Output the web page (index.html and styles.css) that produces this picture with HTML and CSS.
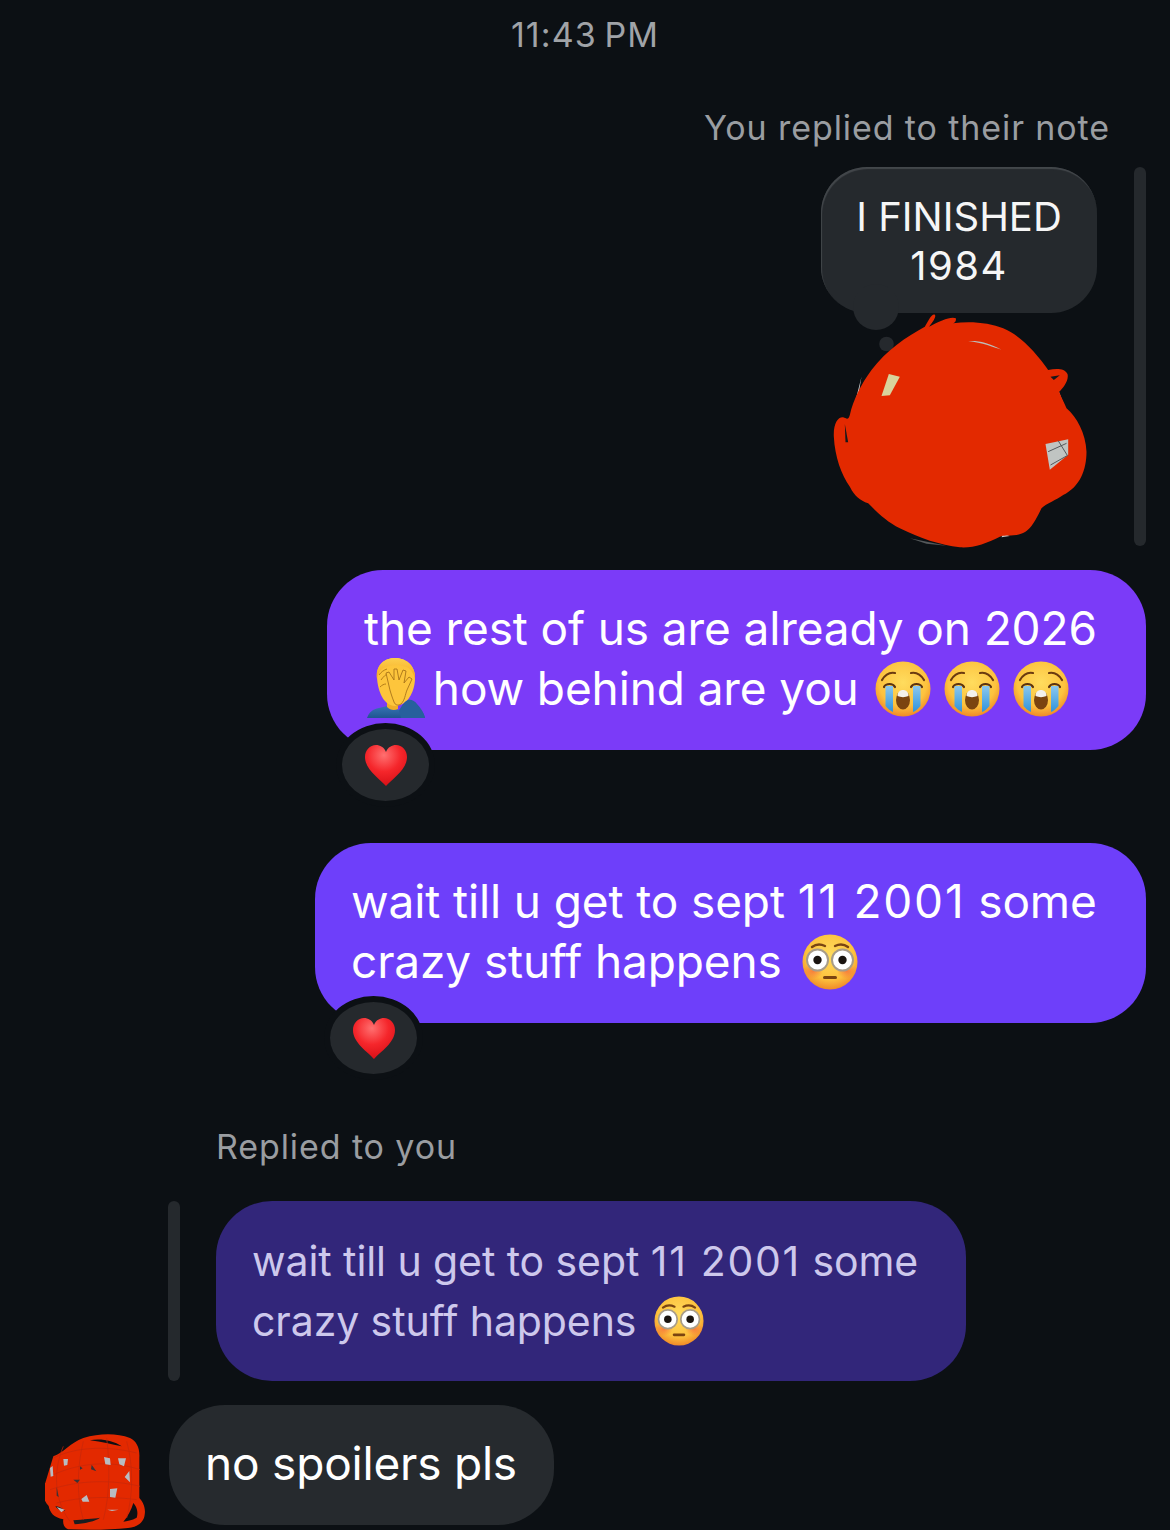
FILE: index.html
```html
<!DOCTYPE html>
<html lang="en">
<head>
    <meta charset="UTF-8">
    <meta name="viewport" content="width=device-width, initial-scale=1.0">
    <title>Chat</title>
    <link rel="stylesheet" href="styles.css">
</head>
<body>
    <svg class="defs" width="0" height="0" aria-hidden="true">
        <defs>
            <radialGradient id="skin" cx="50%" cy="38%" r="62%">
                <stop offset="0" stop-color="#ffdc5e"/>
                <stop offset="0.7" stop-color="#fdc23e"/>
                <stop offset="1" stop-color="#f08a28"/>
            </radialGradient>
            <linearGradient id="tear" x1="0" y1="0" x2="0" y2="1">
                <stop offset="0" stop-color="#8cc8ee"/>
                <stop offset="1" stop-color="#2f93dc"/>
            </linearGradient>
            <radialGradient id="heartfill" cx="45%" cy="25%" r="80%">
                <stop offset="0" stop-color="#ff7070"/>
                <stop offset="0.5" stop-color="#f5262b"/>
                <stop offset="1" stop-color="#d40d14"/>
            </radialGradient>
            <radialGradient id="cheek" cx="50%" cy="50%" r="50%">
                <stop offset="0" stop-color="#f4603c" stop-opacity="0.7"/>
                <stop offset="1" stop-color="#f4603c" stop-opacity="0"/>
            </radialGradient>
            <linearGradient id="shirt" x1="0" y1="0" x2="0" y2="1">
                <stop offset="0" stop-color="#3f7fc0"/>
                <stop offset="1" stop-color="#1f5590"/>
            </linearGradient>
            <linearGradient id="hair" x1="0" y1="0" x2="0" y2="1">
                <stop offset="0" stop-color="#fdcf4e"/>
                <stop offset="1" stop-color="#f4a71e"/>
            </linearGradient>

            <symbol id="cry" viewBox="0 0 56 56">
                <circle cx="28" cy="28" r="27.500" fill="url(#skin)"/>
                <path d="M7 19c3-5 8-8 13-7M49 19c-3-5-8-8-13-7" fill="none" stroke="#6b3a10" stroke-width="2.200" stroke-linecap="round"/>
                <path d="M9 26c2-4 9-4 11 0M36 26c2-4 9-4 11 0" fill="none" stroke="#5c3310" stroke-width="2.200" stroke-linecap="round"/>
                <path d="M10.500 25h7.500v26c-3-1.500-5.500-3.500-7.500-6zM38 25h7.500v20c-2 2.500-4.500 5-7.500 6z" fill="url(#tear)"/>
                <ellipse cx="28" cy="39" rx="7" ry="9.500" fill="#7b4410"/>
                <path d="M22.500 35c0-4 2.500-6 5.500-6s5.500 2 5.500 6c-3.500 1.500-7.500 1.500-11 0z" fill="#f4f1ec"/>
            </symbol>

            <symbol id="flushed" viewBox="0 0 56 56">
                <circle cx="28" cy="28" r="27.500" fill="url(#skin)"/>
                <ellipse cx="11" cy="37" rx="10" ry="8" fill="url(#cheek)"/>
                <ellipse cx="45" cy="37" rx="10" ry="8" fill="url(#cheek)"/>
                <path d="M10 13c4-3 9-3 13-1M33 12c4-2 9-2 13 1" fill="none" stroke="#7a4512" stroke-width="2.400" stroke-linecap="round"/>
                <circle cx="15.500" cy="26" r="10.500" fill="#fff" stroke="#a89c88" stroke-width="2"/>
                <circle cx="40.500" cy="26" r="10.500" fill="#fff" stroke="#a89c88" stroke-width="2"/>
                <circle cx="15.500" cy="26" r="4.200" fill="#1a1410"/>
                <circle cx="40.500" cy="26" r="4.200" fill="#1a1410"/>
                <rect x="21" y="42" width="14" height="3" rx="1.500" fill="#7b4410"/>
            </symbol>

            <symbol id="heart" viewBox="0 0 42 42">
                <path d="M21 41C15 34 0 25 0 12 0 5 5 0 11 0c4 0 8 2 10 7 2-5 6-7 10-7 6 0 11 5 11 12 0 13-15 22-21 29z" fill="url(#heartfill)"/>
            </symbol>

            <symbol id="facepalm" viewBox="0 0 58 60">
                <path d="M0 60c2-6 6-9 12-10l8-2 12 4 10-8 8 4c4 3 7 7 8 12z" fill="url(#shirt)"/>
                <path d="M20 43h11v8c-4 2-8 1-11-2z" fill="#f0ad28"/>
                <path d="M10 20C9 6 18 0 28 0s20 6 20 20c0 14-8 28-20 28-11 0-17-14-18-28z" fill="#fdc53c"/>
                <path d="M10 21C8 7 18 0 28 0s21 7 20 21c-2-7-5-11-9-12-8-3-17-2-22 1-4 2-6 6-7 11z" fill="url(#hair)"/>
                <path d="M14 22c2-3 5-6 8-7M13 29c2-2 4-3 6-3M12 17c2-3 5-5 8-6" fill="none" stroke="#b57d18" stroke-width="1"/>
                <path d="M22 28l-3-13 3-1 5 8 0-11 3 0 2 11 4-10 3 1-2 12 5-6 3 2-5 11c-2 5-2 10-6 14-3 2-6 1-7-2-2-5-4-11-5-16z" fill="#fdc53c" stroke="#a8741a" stroke-width="0.900" stroke-linejoin="round"/>
                <path d="M32 53c2-5 5-9 9-11 3-1 7 1 9 4 4 4 7 9 8 14H34z" fill="#27609c"/>
            </symbol>
        </defs>
    </svg>

    <main class="chat">
        <div class="time">11:43 PM</div>

        <div class="label label-out">You replied to their note</div>
        <div class="note-row">
            <div class="note-col">
                <div class="note">I FINISHED<br><span class="note-year">1984</span></div>
                <svg class="blob" viewBox="100 480 770 720" aria-hidden="true">
                    <circle cx="260" cy="582" r="22" fill="#25292d"/>
                    <path d="M655 575l85 80-20 0zM775 720l18 45-14 0zM725 1045l-25 35 10-30zM610 1150l20 8-25 4zM165 760l20-80-10 60z" fill="#c9c9c9"/>
                    <path d="M330 1165l110 22-60-6z" fill="#55585a"/>
                    <path d="M405 494C410 500 400 515 388 530C420 512 455 498 468 505C470 512 465 518 460 520C510 512 570 518 610 535C660 555 710 610 745 660C770 655 795 655 803 672C808 690 790 715 778 725C785 745 795 760 800 775C830 800 858 850 860 905C860 960 840 1010 790 1035C770 1050 740 1060 725 1075C705 1115 690 1150 650 1155C625 1158 610 1155 600 1160C560 1180 520 1195 480 1192C420 1185 360 1165 300 1135C260 1115 230 1085 205 1060C180 1050 165 1040 150 1010C125 975 105 920 102 860C100 820 115 800 130 802C140 805 145 812 150 795C160 750 185 700 215 660C260 600 320 560 375 530C385 515 395 490 405 494Z" fill="#e32900"/>
                    <path d="M245 738l22-66 33 8-30 56z" fill="#d9d39c"/>
                    <path d="M737 882l68-14v46l-55 45z" fill="#c0c4c2"/>
                    <path d="M745 905l55-25M752 945l50-28M775 872l28 45" stroke="#55595c" stroke-width="3" fill="none"/>
                    <path d="M505 573c30-2 60 4 100 26-20-6-60-22-100-26z" fill="#bdbdb8"/>
                    <path d="M135 822l10 55-8 0z" fill="#14181b"/>
                    <path d="M752 680l28-4-18 14z" fill="#14181b"/>
                </svg>
            </div>
            <div class="bar"></div>
        </div>

        <div class="msg-row msg-row-first">
            <div class="bubble bubble-a">
                the rest of us are already on 2026<br>
                <svg class="emoji emoji-palm"><use href="#facepalm"/></svg> how behind are you
                <svg class="emoji emoji-lead"><use href="#cry"/></svg><svg class="emoji emoji-gap"><use href="#cry"/></svg><svg class="emoji emoji-gap"><use href="#cry"/></svg>
                <div class="reaction"><svg class="heart"><use href="#heart"/></svg></div>
            </div>
        </div>

        <div class="msg-row msg-row-second">
            <div class="bubble bubble-b">
                wait till u get to sept <span class="date">11 2001</span> some<br>
                crazy stuff happens <svg class="emoji emoji-flush"><use href="#flushed"/></svg>
                <div class="reaction"><svg class="heart"><use href="#heart"/></svg></div>
            </div>
        </div>

        <div class="label label-in">Replied to you</div>
        <div class="quote-row">
            <div class="bar bar-quote"></div>
            <div class="bubble-quote">
                wait till u get to sept <span class="date">11 2001</span> some<br>
                crazy stuff happens <svg class="emoji emoji-small"><use href="#flushed"/></svg>
            </div>
        </div>

        <div class="last-row">
            <svg class="avatar" viewBox="45 100 300 291" aria-hidden="true">
                <path d="M70 170c30-10 50-40 90-55 50-15 100-15 140 0 20 10 30 30 28 60l0 120c10 10 20 30 16 50-2 20-20 38-50 40-50 6-120 6-180 4-14-6-16-20-14-30-30-6-40-20-44-40-20-20-20-50-10-70z" fill="#e32900"/>
                <path d="M180 122c30-6 70 0 95 18-30-6-60-14-95-18z" fill="#0c1014"/>
                <path d="M310 310c10 10 16 30 10 44-14 8-30 10-40 12 14-16 24-36 30-56z" fill="#0c1014"/>
                <path d="M130 362c30-4 60-4 80-8-10 10-50 18-76 20zM76 320c10 0 20 6 30 14-10 0-24-4-30-14z" fill="#1a1d20"/>
                <path d="M70 175c60-30 150-40 250-15M60 230c80-40 180-50 270-20M60 270c90-30 190-30 270-10M80 310c70-20 170-20 240-10M100 140c-30 70-30 160 20 225M160 125c-20 80-20 170 0 235M230 115c10 80 10 170-10 245M290 125c20 70 20 160 0 230" fill="none" stroke="#c4270a" stroke-width="2"/>
                <path d="M100 178l14 0-2 18-10 2zM222 172l18 4 2 20-16-2zM264 176l24 0-6 24-14-6zM284 232l14-18 2 34zM240 268l22-2-6 28-16-2zM154 298l16-12 8 20-20 0zM60 205l8-6 2 30-8 2zM80 322l24 8-10 8zM232 330l34 0-20 4z" fill="#b8bcc2"/>
                <path d="M185 195l14 20-16-6zM150 200l8 6-8 4zM130 240l20 0-8 10zM80 262l6 30-6-4z" fill="#3a3336"/>
            </svg>
            <div class="bubble-in">no spoilers pls</div>
        </div>
    </main>
</body>
</html>
```

FILE: styles.css
```css
body {
    margin: 0;
    background-color: #0c1014;
    font-family: 'Inter', 'Liberation Sans', sans-serif;
    color: #fff;
}

.defs {
    position: absolute;
}

.chat {
    width: 1170px;
    height: 1530px;
    overflow: hidden;
    display: flex;
    flex-direction: column;
}

/* Time and small labels */
.time {
    padding-top: 14px;
    line-height: 42px;
    font-size: 34px;
    letter-spacing: 1.1px;
    word-spacing: -3px;
    text-align: center;
    color: #a0a3a7;
}

.label {
    line-height: 40px;
    font-size: 34px;
    letter-spacing: 0.9px;
    color: #9a9da1;
}

.label-out {
    margin-top: 52px;
    margin-bottom: 19px;
    padding-right: 60px;
    text-align: right;
}

.label-in {
    margin-top: 104px;
    margin-bottom: 34px;
    padding-left: 216px;
}

/* Note */
.note-row {
    display: flex;
    justify-content: flex-end;
    gap: 37px;
    padding-right: 24px;
}

.note-col {
    width: 276px;
    display: flex;
    flex-direction: column;
}

.note {
    position: relative;
    box-sizing: border-box;
    height: 146px;
    padding-top: 25px;
    border-radius: 46px;
    background-color: #25292d;
    box-shadow: inset 1px 2px 1px #43474b;
    font-size: 40px;
    line-height: 49px;
    text-align: center;
    color: #f6f6f6;
}

.note-year {
    letter-spacing: 1.500px;
}

.note::after {
    content: "";
    position: absolute;
    left: 32px;
    bottom: -17px;
    width: 46px;
    height: 46px;
    border-radius: 50%;
    background-color: #25292d;
}

.blob {
    display: block;
    width: 257px;
    height: 240px;
    margin: -3px 0 -4px 12px;
}

.bar {
    width: 12px;
    border-radius: 6px;
    background-color: #25292d;
}

/* Sent messages */
.msg-row {
    display: flex;
    justify-content: flex-end;
    padding-right: 24px;
}

.msg-row-first {
    margin-top: 24px;
}

.msg-row-second {
    margin-top: 93px;
}

.bubble {
    position: relative;
    box-sizing: border-box;
    height: 180px;
    padding: 28px 36px;
    border-radius: 56px;
    font-size: 46px;
    letter-spacing: -0.12px;
    line-height: 60px;
    white-space: nowrap;
}

.bubble-a {
    width: 819px;
    padding-left: 37px;
    background-color: #7b3bf8;
}

.bubble-b {
    width: 831px;
    background-color: #6e3ffa;
}

.date {
    letter-spacing: 1.800px;
}

.reaction {
    position: absolute;
    left: 9px;
    top: 153px;
    width: 87px;
    height: 72px;
    border: 6px solid #0c1014;
    border-radius: 50%;
    background-color: #25292d;
    display: flex;
    align-items: center;
    justify-content: center;
}

.heart {
    width: 42px;
    height: 42px;
    margin-top: 1px;
}

.emoji {
    display: inline-block;
    width: 56px;
    height: 56px;
    vertical-align: -12px;
}

.emoji-palm {
    width: 58px;
    height: 60px;
    vertical-align: -13px;
    margin-left: 3px;
    margin-right: -5px;
}

.emoji-lead {
    margin-left: 3px;
}

.emoji-gap {
    margin-left: 13px;
}

.emoji-flush {
    margin-left: 7px;
}

.emoji-small {
    width: 50px;
    height: 50px;
    margin-left: 6px;
    vertical-align: -10px;
}

/* Quoted message */
.quote-row {
    display: flex;
    gap: 36px;
    padding-left: 168px;
}

.bar-quote {
    height: 180px;
}

.bubble-quote {
    box-sizing: border-box;
    width: 750px;
    height: 180px;
    padding: 30px 36px;
    border-radius: 56px;
    background-color: #32267a;
    color: #cdc8ec;
    font-size: 41px;
    letter-spacing: -0.08px;
    line-height: 60px;
    white-space: nowrap;
}

.bubble-quote .date {
    letter-spacing: 1.700px;
}

/* Received message */
.last-row {
    display: flex;
    align-items: flex-end;
    gap: 24px;
    margin-top: 24px;
    padding-left: 45px;
}

.avatar {
    display: block;
    width: 100px;
    height: 97px;
}

.bubble-in {
    box-sizing: border-box;
    height: 120px;
    padding: 28px 37px 28px 36px;
    margin-bottom: 5px;
    border-radius: 56px;
    background-color: #262a2e;
    font-size: 46px;
    letter-spacing: -0.2px;
    line-height: 60px;
}
```
